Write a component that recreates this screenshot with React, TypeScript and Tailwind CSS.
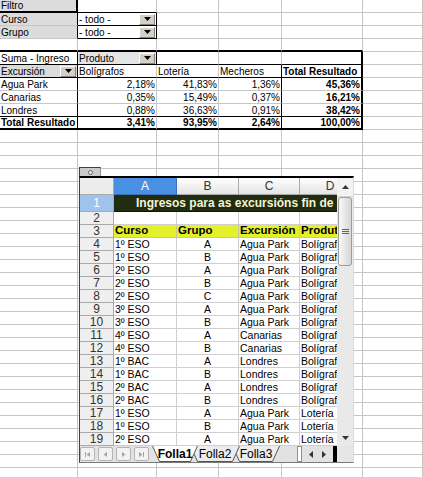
import React from "react";

type Side = "g" | "k" | "K";
type CellSpec = {
  t?: string;
  bg?: string;
  r?: Side;
  b?: Side;
  right?: boolean;
  bold?: boolean;
  dd?: boolean;
};

const widths = ["w-[78px]", "w-[79px]", "w-[62px]", "w-[63px]", "w-[81px]", "w-[60px]"];
const grey = "bg-[#dcdcdc]";

const pivot: CellSpec[][] = [
  [{ t: "Filtro", bg: grey, r: "K", b: "K" }, { b: "k" }, {}, {}, {}, {}],
  [{ t: "Curso", bg: grey, r: "k" }, { t: "- todo -", r: "k", b: "k", dd: true }, {}, {}, {}, {}],
  [{ t: "Grupo", bg: grey, r: "k" }, { t: "- todo -", r: "k", b: "k", dd: true }, {}, {}, {}, {}],
  [{ b: "K" }, { b: "K" }, { b: "K" }, { b: "K" }, { b: "K" }, {}],
  [
    { t: "Suma - Ingreso", r: "k", b: "k" },
    { t: "Produto", bg: "bg-[#e4e4e4]", r: "k", b: "k", dd: true },
    { b: "k" },
    { b: "k" },
    { r: "K", b: "k" },
    {},
  ],
  [
    { t: "Excursión", bg: grey, r: "k", b: "k", dd: true },
    { t: "Bolígrafos", b: "k" },
    { t: "Lotería", b: "k" },
    { t: "Mecheros", r: "k", b: "k" },
    { t: "Total Resultado", bold: true, r: "K", b: "k" },
    {},
  ],
  [
    { t: "Agua Park", r: "k" },
    { t: "2,18%", right: true },
    { t: "41,83%", right: true },
    { t: "1,36%", right: true, r: "k" },
    { t: "45,36%", right: true, bold: true, r: "K" },
    {},
  ],
  [
    { t: "Canarias", r: "k" },
    { t: "0,35%", right: true },
    { t: "15,49%", right: true },
    { t: "0,37%", right: true, r: "k" },
    { t: "16,21%", right: true, bold: true, r: "K" },
    {},
  ],
  [
    { t: "Londres", r: "k", b: "k" },
    { t: "0,88%", right: true, b: "k" },
    { t: "36,63%", right: true, b: "k" },
    { t: "0,91%", right: true, r: "k", b: "k" },
    { t: "38,42%", right: true, bold: true, r: "K", b: "k" },
    {},
  ],
  [
    { t: "Total Resultado", bold: true, r: "k", b: "K" },
    { t: "3,41%", right: true, bold: true, b: "K" },
    { t: "93,95%", right: true, bold: true, b: "K" },
    { t: "2,64%", right: true, bold: true, r: "k", b: "K" },
    { t: "100,00%", right: true, bold: true, r: "K", b: "K" },
    {},
  ],
];

const rows: CellSpec[][] = [...pivot];
while (rows.length < 37) rows.push([{}, {}, {}, {}, {}, {}]);

const data = [
  ["1º ESO", "A", "Agua Park", "Bolígrafos"],
  ["1º ESO", "B", "Agua Park", "Bolígrafos"],
  ["2º ESO", "A", "Agua Park", "Bolígrafos"],
  ["2º ESO", "B", "Agua Park", "Bolígrafos"],
  ["2º ESO", "C", "Agua Park", "Bolígrafos"],
  ["3º ESO", "A", "Agua Park", "Bolígrafos"],
  ["3º ESO", "B", "Agua Park", "Bolígrafos"],
  ["4º ESO", "A", "Canarias", "Bolígrafos"],
  ["4º ESO", "B", "Canarias", "Bolígrafos"],
  ["1º BAC", "A", "Londres", "Bolígrafos"],
  ["1º BAC", "B", "Londres", "Bolígrafos"],
  ["2º BAC", "A", "Londres", "Bolígrafos"],
  ["2º BAC", "B", "Londres", "Bolígrafos"],
  ["1º ESO", "A", "Agua Park", "Lotería"],
  ["1º ESO", "B", "Agua Park", "Lotería"],
  ["2º ESO", "A", "Agua Park", "Lotería"],
];

function DropBtn() {
  return (
    <span className="ml-auto mr-[1px] h-[11px] w-[16px] shrink-0 flex items-center justify-center bg-[#d4d0c8] border-t border-l border-t-white border-l-white border-b border-r border-b-[#808080] border-r-[#808080]">
      <svg width="7" height="4" viewBox="0 0 7 4">
        <polygon points="0,0 7,0 3.5,4" fill="#000" />
      </svg>
    </span>
  );
}

function Cell({ w, c }: { w: string; c: CellSpec }) {
  const r = c.r ?? "g";
  const b = c.b ?? "g";
  return (
    <div
      className={[
        "h-full shrink-0 flex items-center overflow-hidden whitespace-nowrap text-[10px] leading-[11px] text-black",
        w,
        r === "K" ? "border-r-2 border-r-black" : r === "k" ? "border-r border-r-black" : "border-r border-r-[#c6c6c6]",
        b === "K" ? "border-b-2 border-b-black" : b === "k" ? "border-b border-b-black" : "border-b border-b-[#c6c6c6]",
        c.bg ?? "",
        c.right ? "justify-end pr-[1px]" : "pl-[1px]",
        c.bold ? "font-bold" : "",
      ].join(" ")}
    >
      {c.dd ? (
        <>
          <span className="flex-1 overflow-hidden">{c.t}</span>
          <DropBtn />
        </>
      ) : (
        c.t
      )}
    </div>
  );
}

function NavIcon({ kind }: { kind: number }) {
  return (
    <div className="w-[15px] h-[14px] rounded-[2px] border border-[#b4b4b4] bg-[#f2f2f2] flex items-center justify-center">
      <svg width="7" height="7" viewBox="0 0 7 7">
        {kind === 0 && (
          <>
            <path d="M1.5 1v5" stroke="#a6a6a6" />
            <polygon points="6,1 6,6 2.5,3.5" fill="#a6a6a6" />
          </>
        )}
        {kind === 1 && <polygon points="5,1 5,6 1.5,3.5" fill="#a6a6a6" />}
        {kind === 2 && <polygon points="2,1 2,6 5.5,3.5" fill="#a6a6a6" />}
        {kind === 3 && (
          <>
            <polygon points="1,1 1,6 4.5,3.5" fill="#a6a6a6" />
            <path d="M5.5 1v5" stroke="#a6a6a6" />
          </>
        )}
      </svg>
    </div>
  );
}

function Tab({ w, wc, label, active, cls }: { w: number; wc: string; label: string; active?: boolean; cls: string }) {
  return (
    <div className={`relative h-[16px] flex items-center justify-center shrink-0 ${wc} ${cls}`}>
      <svg className="absolute left-0 top-0" width={w} height={16}>
        <polygon points={`0,0 ${w},0 ${w - 7},15.5 7,15.5`} fill={active ? "#ffffff" : "#ececec"} />
        <polyline points={`0.5,0 7.5,15.5 ${w - 7.5},15.5 ${w - 0.5},0`} fill="none" stroke="#555" />
      </svg>
      <span className={`relative text-[12px] leading-none text-black ${active ? "font-bold" : ""}`}>{label}</span>
    </div>
  );
}

function VScroll() {
  return (
    <div className="w-[16px] shrink-0 flex flex-col bg-[#e9e9e9]">
      <div className="h-[19px] flex items-center justify-center bg-[#f2f2f2] border-b border-[#d4d4d4]">
        <svg width="7" height="4" viewBox="0 0 7 4">
          <polygon points="0,4 7,4 3.5,0" fill="#333" />
        </svg>
      </div>
      <div className="mx-[1px] h-[69px] rounded-[3px] border border-[#9c9c9c] bg-gradient-to-r from-[#f8f8f8] to-[#d6d6d6] flex items-center justify-center">
        <svg width="7" height="6" viewBox="0 0 7 6">
          <path d="M0 0.5H7M0 2.5H7M0 4.5H7" stroke="#666" />
        </svg>
      </div>
      <div className="flex-1" />
      <div className="h-[16px] flex items-center justify-center">
        <svg width="7" height="4" viewBox="0 0 7 4">
          <polygon points="0,0 7,0 3.5,4" fill="#333" />
        </svg>
      </div>
    </div>
  );
}

function TabBar() {
  return (
    <div className="flex h-[16px] shrink-0 bg-[#e2e2e2]">
      <div className="flex gap-[3px] w-[69px] shrink-0 pt-[1px]">
        {[0, 1, 2, 3].map((k) => (
          <NavIcon key={k} kind={k} />
        ))}
      </div>
      <div className="flex ml-[3px] shrink-0">
        <Tab w={46} wc="w-[46px]" label="Folla1" active cls="z-30" />
        <Tab w={50} wc="w-[50px]" label="Folla2" cls="z-20 -ml-[8px]" />
        <Tab w={48} wc="w-[48px]" label="Folla3" cls="z-10 -ml-[8px]" />
      </div>
      <div className="ml-[17px] w-[5px] shrink-0 bg-white border border-[#909090]" />
      <div className="w-[31px] shrink-0 flex items-center justify-center gap-[9px]">
        <svg width="4" height="7" viewBox="0 0 4 7">
          <polygon points="4,0 4,7 0,3.5" fill="#333" />
        </svg>
        <svg width="4" height="7" viewBox="0 0 4 7">
          <polygon points="0,0 0,7 4,3.5" fill="#333" />
        </svg>
      </div>
      <div className="w-[4px] shrink-0 bg-black" />
      <div className="w-[16px] shrink-0 bg-[#e6e6e6]" />
    </div>
  );
}

function EmbeddedSheet() {
  const hdr = "h-full shrink-0 flex items-center justify-center border-r border-b border-[#a9a9a9] text-[12px]";
  return (
    <>
      {/* object handle */}
      <div className="absolute left-[79px] top-[167px] w-[22px] h-[9px] bg-[#cacaca] border-l border-t border-r border-l-[#404040] border-t-[#404040] border-r-[#909090] flex items-center justify-center">
        <span className="block w-[5px] h-[5px] rounded-full border border-[#666] bg-[#e8e8e8]" />
      </div>

      <div className="absolute left-[79px] top-[176px] w-[275px] h-[287px] flex flex-col bg-[#e4e4e4] border-t-2 border-t-black border-l border-l-[#404040] border-r border-r-[#dcdcdc] border-b border-b-[#7a7a7a]">
        <div className="flex h-[268px] shrink-0">
          <div className="w-[257px] shrink-0 flex flex-col overflow-hidden bg-white">
            {/* column headers */}
            <div className="flex h-[17px] shrink-0 text-[#333]">
              <div className={`${hdr} w-[34px] bg-[#ececec]`} />
              <div className={`${hdr} w-[63px] bg-[#4a90e2] text-white border-r-[#3a70b8] border-b-[#3a70b8]`}>A</div>
              <div className={`${hdr} w-[62px] bg-gradient-to-b from-white to-[#e4e4e4]`}>B</div>
              <div className={`${hdr} w-[61px] bg-gradient-to-b from-white to-[#e4e4e4]`}>C</div>
              <div className={`${hdr} w-[61px] bg-gradient-to-b from-white to-[#e4e4e4]`}>D</div>
            </div>

            {/* row 1: title */}
            <div className="flex h-[17px] shrink-0">
              <div className={`${hdr} w-[34px] bg-[#9ec4ee] text-white`}>1</div>
              <div className="w-[223px] shrink-0 h-full bg-[#222c0e] border-b border-[#111] overflow-hidden whitespace-nowrap flex items-center pl-[22px] text-[12px] font-bold text-[#f3f3d6]">
                Ingresos para as excursións fin de curso
              </div>
            </div>

            {/* row 2 */}
            <div className="flex h-[13px] shrink-0">
              <div className={`${hdr} w-[34px] bg-[#efefef] text-[#333]`}>2</div>
              <div className="w-[63px] shrink-0 border-r border-b border-[#cfcfcf]" />
              <div className="w-[62px] shrink-0 border-r border-b border-[#cfcfcf]" />
              <div className="w-[61px] shrink-0 border-r border-b border-[#cfcfcf]" />
              <div className="w-[61px] shrink-0 border-r border-b border-[#cfcfcf]" />
            </div>

            {/* row 3: headers */}
            <div className="flex h-[13px] shrink-0 text-[11.5px] font-bold leading-none text-black">
              <div className={`${hdr} w-[34px] bg-[#efefef] text-[#333] font-normal`}>3</div>
              <div className="w-[63px] shrink-0 flex items-center pl-[1px] bg-[#e4f02a] border-r border-b border-[#c8c8a0] overflow-hidden whitespace-nowrap">Curso</div>
              <div className="w-[62px] shrink-0 flex items-center pl-[1px] bg-[#e4f02a] border-r border-b border-[#c8c8a0] overflow-hidden whitespace-nowrap">Grupo</div>
              <div className="w-[61px] shrink-0 flex items-center pl-[1px] bg-[#e4f02a] border-r border-b border-[#c8c8a0] overflow-hidden whitespace-nowrap">Excursión</div>
              <div className="w-[61px] shrink-0 flex items-center pl-[1px] bg-[#e4f02a] border-r border-b border-[#c8c8a0] overflow-hidden whitespace-nowrap">Produto</div>
            </div>

            {data.map((d, i) => (
              <div key={i} className="flex h-[13px] shrink-0 text-[10.5px] leading-none text-black">
                <div className={`${hdr} w-[34px] bg-[#efefef] text-[#333]`}>{i + 4}</div>
                <div className="w-[63px] shrink-0 flex items-center pl-[1px] border-r border-b border-[#cfcfcf] overflow-hidden whitespace-nowrap">{d[0]}</div>
                <div className="w-[62px] shrink-0 flex items-center justify-center border-r border-b border-[#cfcfcf]">{d[1]}</div>
                <div className="w-[61px] shrink-0 flex items-center pl-[1px] border-r border-b border-[#cfcfcf] overflow-hidden whitespace-nowrap">{d[2]}</div>
                <div className="w-[61px] shrink-0 flex items-center pl-[1px] border-r border-b border-[#cfcfcf] overflow-hidden whitespace-nowrap">{d[3]}</div>
              </div>
            ))}
          </div>
          <VScroll />
        </div>
        <TabBar />
      </div>
    </>
  );
}

export default function App() {
  return (
    <div className="relative w-[423px] h-[477px] overflow-hidden bg-white font-['Liberation_Sans',Arial,sans-serif]">
      <div className="flex flex-col">
        {rows.map((row, i) => (
          <div key={i} className="flex h-[13px] shrink-0">
            {row.map((c, j) => (
              <Cell key={j} w={widths[j]} c={c} />
            ))}
          </div>
        ))}
      </div>
      <EmbeddedSheet />
    </div>
  );
}
